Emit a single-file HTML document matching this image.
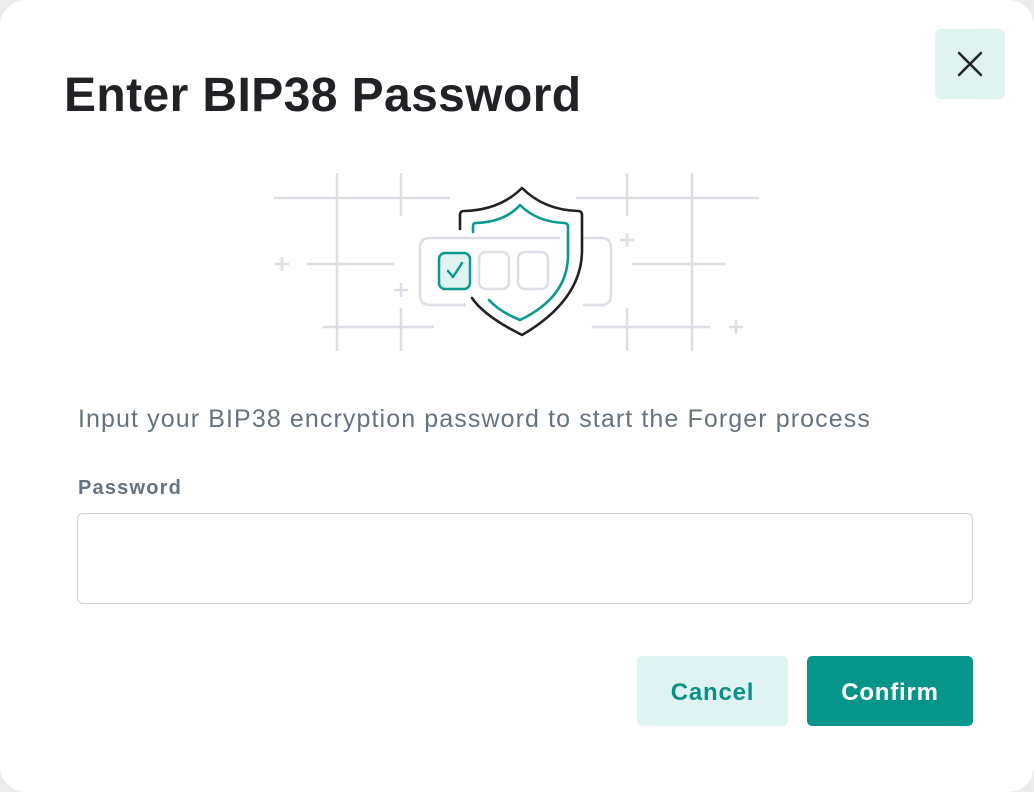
<!DOCTYPE html>
<html><head><meta charset="utf-8"><style>
html,body{margin:0;padding:0;width:1034px;height:792px;background:#ececee;overflow:hidden}
.card{position:absolute;left:0;top:0;width:1034px;height:792px;background:#fff;border-radius:26px;font-family:"Liberation Sans",sans-serif}
h1{position:absolute;left:64px;top:68px;margin:0;font-size:48px;line-height:55px;font-weight:700;color:#212225;letter-spacing:0.4px}
.close{position:absolute;left:935px;top:29px;width:70px;height:70px;background:#e0f3f1;border-radius:6px}
p{position:absolute;left:78px;top:405px;margin:0;font-size:25px;line-height:29px;color:#66727f;letter-spacing:1.1px;white-space:nowrap}
.lbl{position:absolute;left:78px;top:477px;font-size:20px;line-height:23px;font-weight:700;color:#66727f;letter-spacing:1.2px}
.inp{position:absolute;left:77px;top:513px;width:894px;height:89px;border:1.5px solid #cfd2d9;border-radius:6px}
.btn{position:absolute;top:656px;height:70px;padding-top:3px;box-sizing:border-box;border-radius:5px;font-size:24px;font-weight:700;display:flex;align-items:center;justify-content:center;letter-spacing:0.8px}
.cancel{left:637px;width:151px;background:#dff3f2;color:#0a9185}
.confirm{left:807px;width:166px;background:#06958a;color:#fff}
</style></head><body><div class="card">
<h1>Enter BIP38 Password</h1>
<div class="close"><svg width="70" height="70"><path d="M24 24L46 46M46 24L24 46" stroke="#212225" stroke-width="2.6" stroke-linecap="round"/></svg></div>
<svg style="position:absolute;left:0;top:0" width="1034" height="400">
<g stroke="#dcdde5" stroke-width="2.5" fill="none">
<path d="M337 173V351M401 173V216M401 308V351M627 173V216M627 308V351M692 173V351"/>
<path d="M274 198H450M576 198H759M307 264H394M632 264H726M323 327H434M592 327H710"/>
<path d="M275 264H289M282 257V271M394 290H408M401 283V297M620 240H634M627 233V247M729 327H743M736 320V334"/>
<path d="M466 238H430Q420 238 420 248V295Q420 305 430 305H466"/>
<path d="M583 238H601Q611 238 611 248V295Q611 305 601 305H583"/>
<path d="M466 238H560"/>
<rect x="479" y="252" width="30" height="37" rx="7"/>
<rect x="518" y="252" width="30" height="37" rx="7"/>
</g>
<rect x="439" y="253" width="31" height="36" rx="6" fill="#dff3f1" stroke="#0a9a8d" stroke-width="2.5"/>
<path d="M448 271L453 277L462 263" stroke="#0a9a8d" stroke-width="2.5" fill="none" stroke-linecap="round" stroke-linejoin="round"/>
<g fill="none" stroke-width="2.6" stroke-linecap="round" stroke-linejoin="round">
<path d="M460 229V215Q460 211 464 211Q500 210 522 188Q544 210 578 211Q582 211 582 215V250Q582 300 522 335Q484 316 472 298" stroke="#212225"/>
<path d="M473 232V226Q473 223 476 223Q505 222 520 205Q537 222 564 223Q568 223 568 227V255Q568 297 520 320Q500 312 489 300" stroke="#0a9a8d"/>
</g>
</svg>
<p>Input your BIP38 encryption password to start the Forger process</p>
<div class="lbl">Password</div>
<div class="inp"></div>
<div class="btn cancel">Cancel</div>
<div class="btn confirm">Confirm</div>
</div></body></html>
